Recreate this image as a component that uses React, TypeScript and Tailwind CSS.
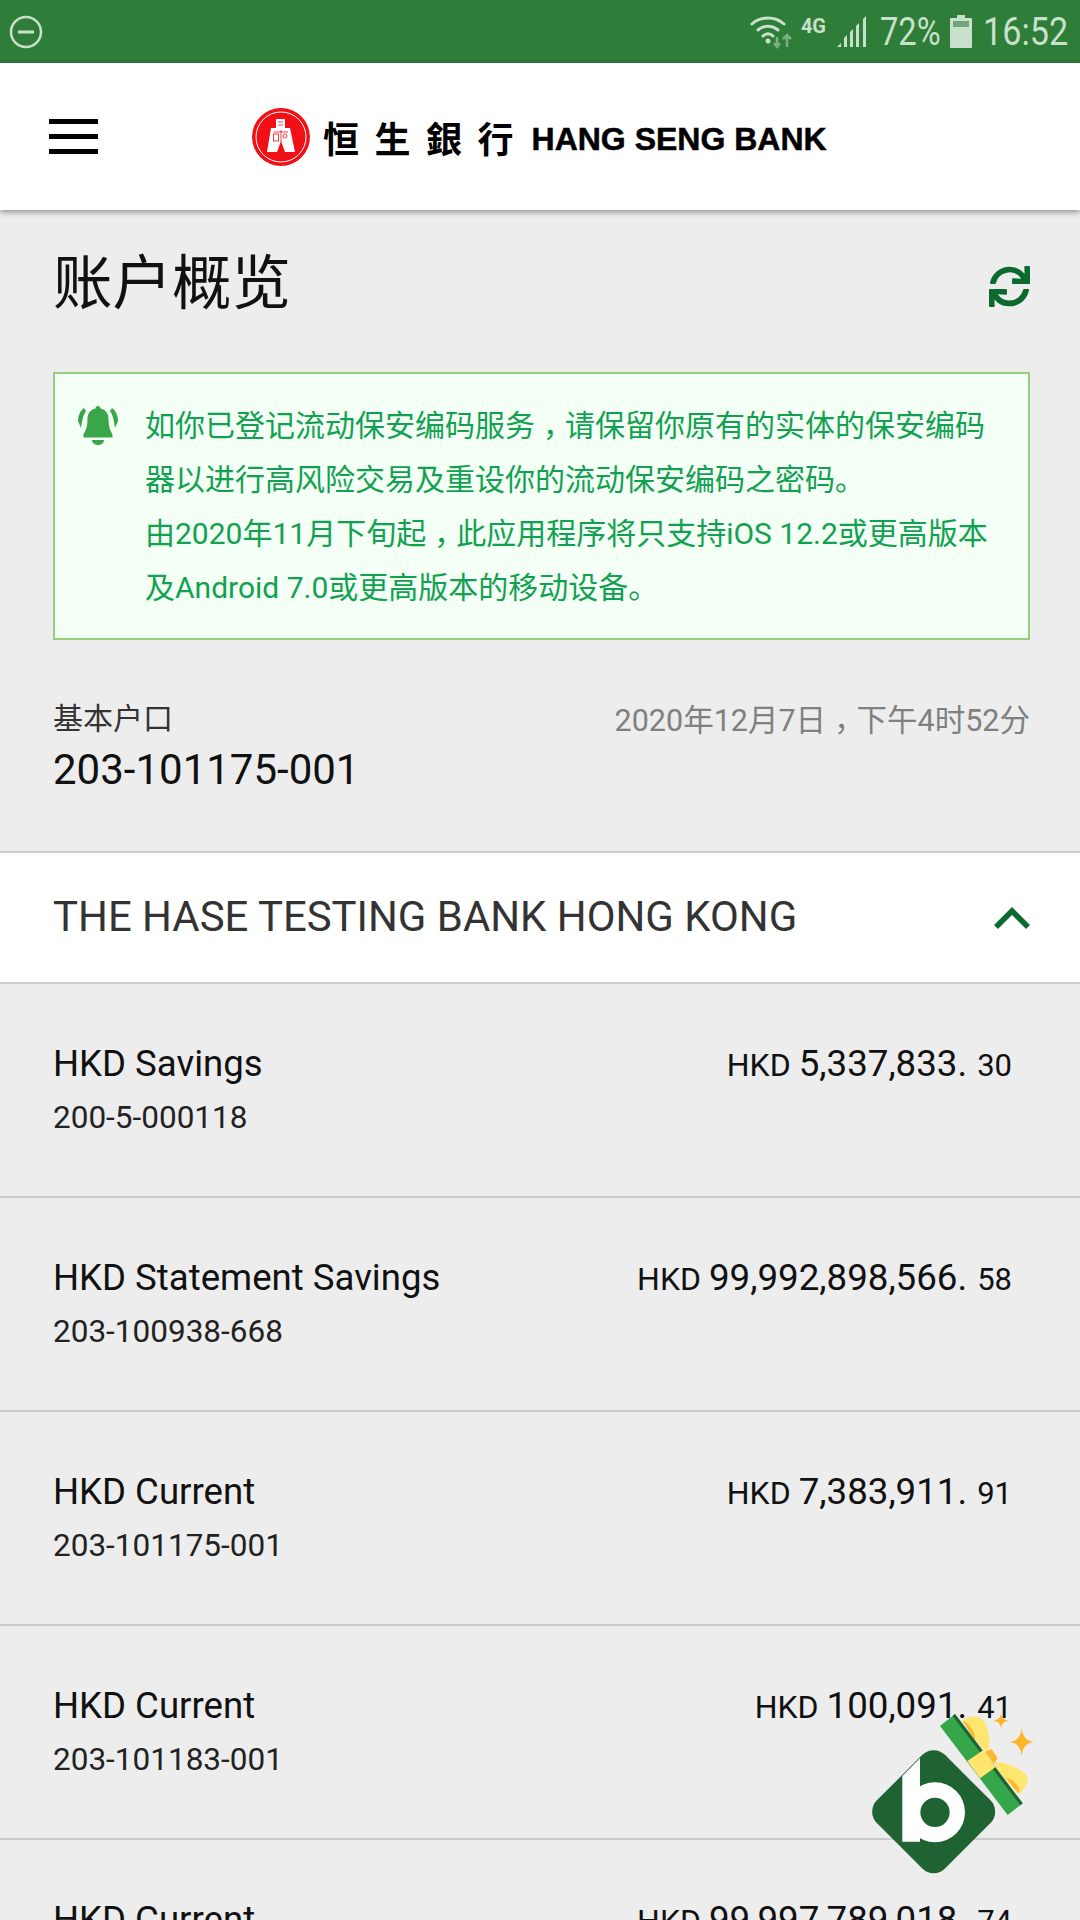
import { FaSync } from "react-icons/fa";

const accounts = [
  { name: "HKD Savings", no: "200-5-000118", amount: "5,337,833.", cents: "30" },
  { name: "HKD Statement Savings", no: "203-100938-668", amount: "99,992,898,566.", cents: "58" },
  { name: "HKD Current", no: "203-101175-001", amount: "7,383,911.", cents: "91" },
  { name: "HKD Current", no: "203-101183-001", amount: "100,091.", cents: "41" },
  { name: "HKD Current", no: "", amount: "99,997,789,018.", cents: "74" },
];

// the app's font sets the full-width comma in the middle of its cell, on the baseline
function Comma() {
  return <span className="relative top-[9px] font-['Noto_Sans_CJK_TC',sans-serif] leading-[0]">，</span>;
}

function StatusBar() {
  return (
    <div className="flex h-[63px] items-center justify-between bg-[#2e7d39] pl-[9px] pr-[13px] text-[#c9e0cc]">
      <svg width="34" height="34" viewBox="0 0 34 34" fill="none" stroke="currentColor" strokeWidth="2.5">
        <circle cx="17" cy="17" r="15" />
        <path d="M9 17h16" strokeWidth="3" />
      </svg>
      <div className="flex items-center">
        <svg width="44" height="36" viewBox="0 0 44 36" fill="none" stroke="currentColor" strokeWidth="3" strokeLinecap="round">
          <path d="M2 10C11 2 25 2 34 10" />
          <path d="M8 16C14 11 22 11 28 16" />
          <path d="M13 22C16 19 20 19 23 22" />
          <circle cx="18" cy="27" r="2.500" fill="currentColor" stroke="none" />
          <path d="M27 23v10M24 29l3 4 3-4" strokeWidth="2.500" opacity="0.5" strokeLinecap="butt" />
          <path d="M37 33V21M33 25l4-4 4 4" strokeWidth="2.500" opacity="0.5" strokeLinecap="butt" />
        </svg>
        <span className="mb-[12px] ml-[7px] text-[20px] font-bold leading-none">4G</span>
        <svg className="ml-[10px]" width="32" height="34" viewBox="0 0 32 34" fill="currentColor">
          <path d="M1 32l4-4v4zM8 32v-9l3-3v12zM14 32V17l3-3v18zM20 32V11l3-3v24zM27 32V4l3-3v31z" />
        </svg>
        <span className="ml-[12px] w-[61px] origin-left scale-x-[0.86] whitespace-nowrap text-[38px] leading-none">72%</span>
        <svg className="ml-[9px]" width="22" height="33" viewBox="0 0 22 33" fill="currentColor">
          <path d="M7 0h8v3h6a1 1 0 0 1 1 1v28a1 1 0 0 1-1 1H1a1 1 0 0 1-1-1V4a1 1 0 0 1 1-1h6z" />
          <path d="M3 6h16v6H3z" fill="#6fa77a" />
        </svg>
        <span className="ml-[11px] w-[84px] origin-left scale-x-[0.9] whitespace-nowrap text-[38px] leading-none">16:52</span>
      </div>
    </div>
  );
}

function Logo() {
  return (
    <div className="flex items-center">
      <svg width="58" height="58" viewBox="0 0 58 58">
        <circle cx="29" cy="29" r="29" fill="#f01016" />
        <circle cx="29" cy="29" r="25" fill="none" stroke="#fff" strokeWidth="1" />
        <path d="M24 11h9v9h5l5 24H33l-4-11-4 11H15l4-24h5z" fill="#fff" />
        <path d="M26 14h5M26 17h5M29 22v12M22 24h14" stroke="#f01016" strokeWidth="0.800" fill="none" />
        <rect x="21.500" y="26" width="5" height="7" fill="none" stroke="#f01016" strokeWidth="0.800" />
        <circle cx="33" cy="28" r="2" fill="none" stroke="#f01016" strokeWidth="0.800" />
      </svg>
      <span className="ml-[13px] whitespace-nowrap font-['Noto_Sans_CJK_TC',sans-serif] text-[36px] font-bold leading-none tracking-[15.5px] text-black">
        恒生銀行
      </span>
      <span className="ml-[2.5px] mt-[4px] whitespace-nowrap font-['Liberation_Sans',sans-serif] text-[32px] font-bold leading-none text-black [-webkit-text-stroke:0.5px_black]">
        HANG SENG BANK
      </span>
    </div>
  );
}

function Header() {
  return (
    <div className="relative flex h-[147px] items-center bg-white pl-[49px] shadow-[0_2px_6px_rgba(0,0,0,0.4)]">
      <div className="flex w-[203px] shrink-0 flex-col gap-[10px]">
        <div className="h-[5px] w-[49px] bg-black" />
        <div className="h-[5px] w-[49px] bg-black" />
        <div className="h-[5px] w-[49px] bg-black" />
      </div>
      <Logo />
    </div>
  );
}

function Notice() {
  return (
    <div className="flex h-[268px] border-2 border-[#93cf7f] bg-[#f4fff6] pl-[23px] pr-[14px] pt-[25px]">
      <svg className="mt-[7px] shrink-0" width="40" height="40" viewBox="0 0 40 40" fill="#3aa648">
        <path d="M20 0c1.500 0 2.500 1 2.500 2.500 5 1 8 5 8 10 0 9 2 12 4 16v3H5.500v-3c2-4 4-7 4-16 0-5 3-9 8-10C17.500 1 18.500 0 20 0z" />
        <path d="M14 34h12c0 3-3 5-6 5s-6-2-6-5z" />
        <path d="M6 2C2 5 0 10 0 15l3 7c1-7 2-13 5-17zM34 2c4 3 6 8 6 13l-3 7c-1-7-2-13-5-17z" />
      </svg>
      <p className="ml-[27px] font-['Roboto','Noto_Sans_CJK_SC',sans-serif] text-[30px] leading-[54px] text-[#12a150]">
        如你已登记流动保安编码服务
        <Comma />
        请保留你原有的实体的保安编码器以进行高风险交易及重设你的流动保安编码之密码。
        <br />
        由2020年11月下旬起
        <Comma />
        此应用程序将只支持iOS 12.2或更高版本及Android 7.0或更高版本的移动设备。
      </p>
    </div>
  );
}

function AccountRow({ name, no, amount, cents }: (typeof accounts)[number]) {
  return (
    <div className="flex h-[214px] shrink-0 items-start justify-between border-b-2 border-[#cbcbcb] pl-[53px] pr-[68px] pt-[57px]">
      <div>
        <div className="text-[36.6px] leading-[46px] text-[#111]">{name}</div>
        {no && <div className="mt-[11px] text-[31.5px] leading-[40px] text-[#222]">{no}</div>}
      </div>
      <div className="flex items-baseline whitespace-nowrap text-[#111]">
        <span className="text-[32px] leading-[46px]">HKD</span>
        <span className="ml-[8px] text-[36.7px] leading-[46px]">{amount}</span>
        <span className="ml-[10px] text-[31px] leading-[46px]">{cents}</span>
      </div>
    </div>
  );
}

function Badge() {
  return (
    <svg className="absolute right-0 top-[1690px]" width="240" height="230" viewBox="0 0 720 690">
      <rect x="136.500" y="220.500" width="289" height="289" rx="48" transform="rotate(45 281 365)" fill="#1e6331" />
      <path d="M187 258L240 205V455H187z" fill="#fff" />
      <circle cx="285" cy="367" r="90" fill="#fff" />
      <circle cx="285" cy="367" r="44" fill="#1e6331" />
      <path d="M365 92C395 72 430 75 440 110C448 135 450 160 446 182L430 180z" fill="#fee56e" />
      <path d="M368 92C395 105 405 130 406 152L385 120z" fill="#fdb52b" />
      <path d="M468 215C510 220 560 245 563 265C565 285 545 305 535 312L466 232z" fill="#fee56e" />
      <path d="M498 262C525 272 540 292 538 310L520 292z" fill="#fdb52b" />
      <path d="M300 108L345 72L548 340L503 375z" fill="#35a64a" />
      <path d="M345 72L548 340L541 346L338 78z" fill="#1e6331" />
      <path d="M382 213L430 180L466 232L420 265z" fill="#fee56e" />
      <path d="M435 185L455 178L473 205L462 222z" fill="#fdb52b" />
      <path d="M483 70Q485 90 505 92Q485 94 483 116Q481 94 461 92Q481 90 483 70z" fill="#fdb52b" />
      <path d="M545 114Q548 152 582 156Q548 160 545 198Q542 160 508 156Q542 152 545 114z" fill="#fdb52b" />
    </svg>
  );
}

export default function App() {
  return (
    <div className="relative h-[1920px] w-[1080px] overflow-hidden bg-[#ededed] font-['Roboto',sans-serif]">
      <StatusBar />
      <Header />
      <div className="flex h-[152px] items-center justify-between pl-[53px] pr-[50px]">
        <h1 className="-mt-[15px] font-['Noto_Sans_CJK_SC',sans-serif] text-[59.5px] font-normal leading-none text-[#111]">账户概览</h1>
        <FaSync className="text-[#0b6b2e]" size={41} />
      </div>
      <div className="ml-[53px] mr-[50px] mt-[10px]">
        <Notice />
      </div>
      <div className="flex items-start justify-between pl-[53px] pr-[50px] pt-[59px]">
        <div>
          <div className="font-['Roboto','Noto_Sans_CJK_SC',sans-serif] text-[30px] leading-[40px] text-[#333]">基本户口</div>
          <div className="mt-[6px] text-[42px] leading-[50px] text-[#111]">203-101175-001</div>
        </div>
        <div className="mt-[2px] font-['Roboto','Noto_Sans_CJK_SC',sans-serif] text-[30.5px] leading-[40px] text-[#808080]">
          2020年12月7日
          <Comma />
          下午4时52分
        </div>
      </div>
      <div className="mt-[56px] flex h-[133px] items-center justify-between border-y-2 border-[#cbcbcb] bg-white pl-[53px] pr-[50px]">
        <span className="text-[41.9px] text-[#333]">THE HASE TESTING BANK HONG KONG</span>
        <svg width="36" height="22" viewBox="0 0 36 22" fill="none" stroke="#0b6b2e" strokeWidth="5.500">
          <path d="M2 20L18 4l16 16" />
        </svg>
      </div>
      <div className="flex flex-col">
        {accounts.map((a) => (
          <AccountRow key={a.amount} {...a} />
        ))}
      </div>
      <Badge />
    </div>
  );
}
